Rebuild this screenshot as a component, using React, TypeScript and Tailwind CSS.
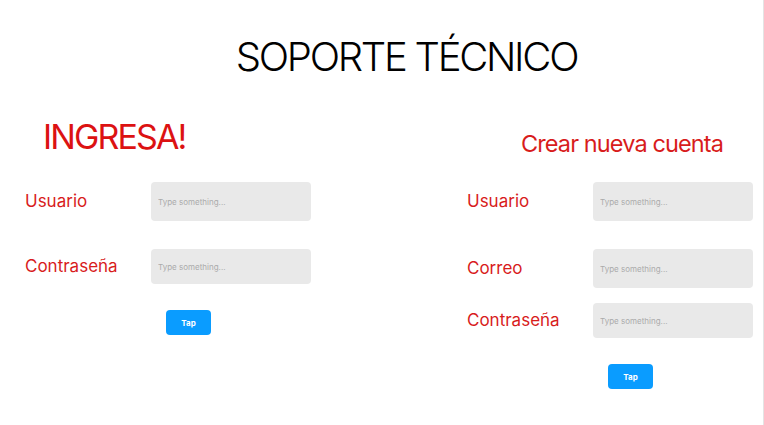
import React from 'react';

function Field({ label, tall = true }: { label: string; tall?: boolean }) {
  return (
    <div className="flex items-center">
      <span className="w-[126px] text-[17px] text-[#d81c1c] leading-none">{label}</span>
      <input
        type="text"
        placeholder="Type something..."
        className={`w-[160px] ${tall ? 'h-[39px]' : 'h-[35px]'} rounded-[4px] bg-[#e9e9e9] px-[7px] text-[8px] placeholder:text-[#ababab] outline-none`}
      />
    </div>
  );
}

function TapButton() {
  return (
    <button className="block w-[45px] h-[25px] rounded-[4px] bg-[#0a9cff] text-white text-[8px] font-bold">
      Tap
    </button>
  );
}

export default function App() {
  return (
    <div
      className="w-[764px] h-[425px] bg-white border-r border-[#e4e4e4] overflow-hidden"
      style={{ fontFamily: 'Inter, "Noto Sans", sans-serif' }}
    >
      <h1 className="pt-[37px] text-center text-[40px] leading-[40px] font-light tracking-[-0.057em] text-black pl-[50px]">
        SOPORTE TÉCNICO
      </h1>

      <div className="flex">
        {/* Ingresar */}
        <section className="w-[442px] pl-[25px]">
          <h2 className="mt-[43px] ml-[18px] text-[34px] leading-[34px] tracking-[-0.055em] text-[#dc1212]">INGRESA!</h2>
          <div className="mt-[28px] flex flex-col gap-[28px]">
            <Field label="Usuario" />
            <Field label="Contraseña" tall={false} />
          </div>
          <div className="mt-[26px] ml-[141px] flex">
            <TapButton />
          </div>
        </section>

        {/* Crear cuenta */}
        <section className="pl-[25px]">
          <h2 className="mt-[55px] ml-[54px] text-[23.5px] leading-[24px] tracking-[-0.038em] text-[#d81c1c]">Crear nueva cuenta</h2>
          <div className="mt-[26px] flex flex-col">
            <Field label="Usuario" />
            <div className="mt-[28px]">
              <Field label="Correo" />
            </div>
            <div className="mt-[15px]">
              <Field label="Contraseña" tall={false} />
            </div>
          </div>
          <div className="mt-[26px] ml-[141px] flex">
            <TapButton />
          </div>
        </section>
      </div>
    </div>
  );
}
